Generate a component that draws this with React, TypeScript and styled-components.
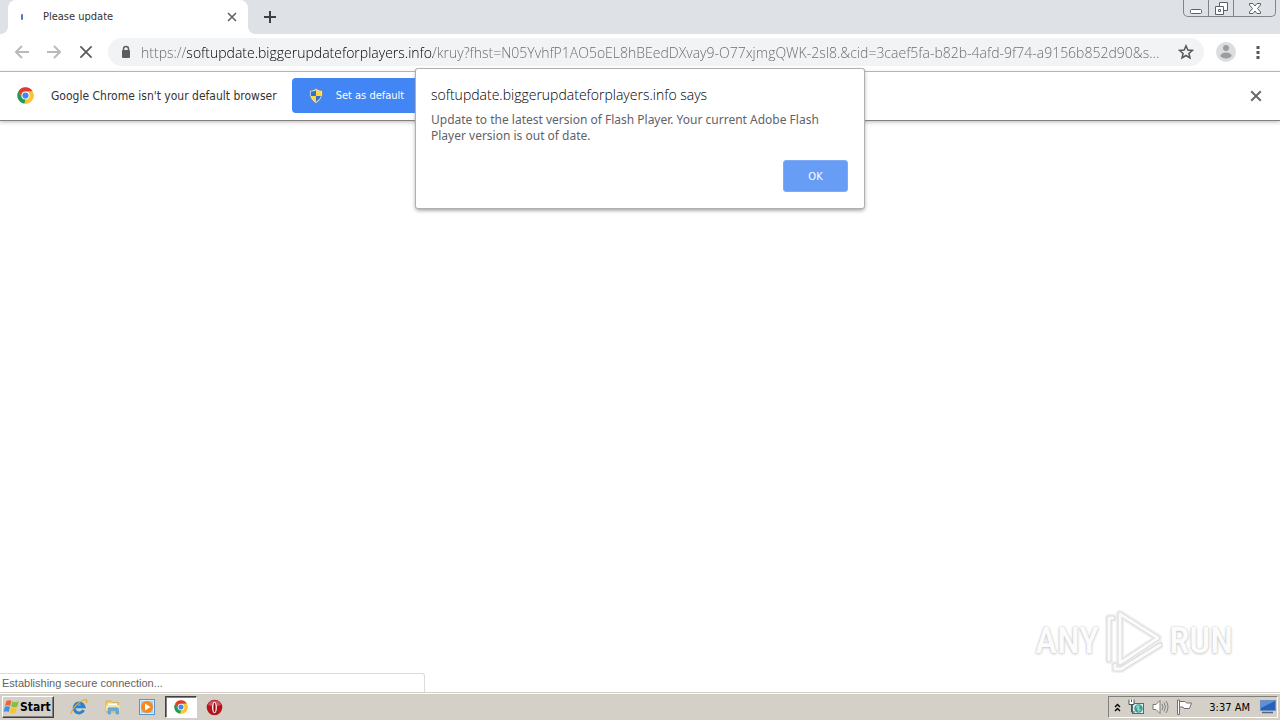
import React from "react";
import styled, { createGlobalStyle, css } from "styled-components";

const uiFont = `"Noto Sans", "Open Sans", sans-serif`;
const lightFont = `"Open Sans", "Noto Sans", sans-serif`;
const classicFont = `"DejaVu Sans Condensed", "DejaVu Sans", sans-serif`;

const GlobalStyle = createGlobalStyle`
  *, *::before, *::after { box-sizing: border-box; }
  body { margin: 0; font-family: ${uiFont}; font-size: 12px; color: #333; background: #fff; }
  button { margin: 0; padding: 0; border: 0; background: none; font: inherit; color: inherit; }
  svg { display: block; flex: none; }
`;

const Desktop = styled.div`
  display: flex;
  flex-direction: column;
  min-height: 100vh;
`;

const Browser = styled.div`
  position: relative;
  display: flex;
  flex: 1;
  flex-direction: column;
`;

const TabStrip = styled.header`
  display: flex;
  align-items: flex-start;
  height: 34px;
  padding-left: 8px;
  background: #dee1e6;
`;

const Tab = styled.div`
  position: relative;
  display: flex;
  align-items: center;
  width: 240px;
  height: 34px;
  padding: 0 10px 0 13px;
  border-radius: 8px 8px 0 0;
  background: #fff;

  &::before,
  &::after {
    content: "";
    position: absolute;
    bottom: 0;
    width: 8px;
    height: 8px;
  }
  &::before {
    right: 100%;
    background: radial-gradient(circle at 0 0, transparent 8px, #fff 8px);
  }
  &::after {
    left: 100%;
    background: radial-gradient(circle at 100% 0, transparent 8px, #fff 8px);
  }
`;

const Spinner = styled.span`
  width: 2px;
  height: 6px;
  margin-right: 20px;
  border-radius: 2px;
  background: #4a77cf;
`;

const TabTitle = styled.span`
  flex: 1;
  font-family: ${classicFont};
  font-size: 11px;
  line-height: 16px;
`;

const IconButton = styled.button<{ $size: number }>`
  display: flex;
  flex: none;
  align-items: center;
  justify-content: center;
  width: ${(p) => p.$size}px;
  height: ${(p) => p.$size}px;
`;

const NewTab = styled(IconButton)`
  margin: 5px 0 0 10px;
`;

const WindowControls = styled.div`
  display: flex;
  height: 17px;
  margin: 0 4px 0 auto;
  border: 1px solid #80848c;
  border-top: 0;
  border-radius: 0 0 5px 5px;
`;

const WindowButton = styled.button<{ $width: number }>`
  display: flex;
  align-items: center;
  justify-content: center;
  width: ${(p) => p.$width}px;

  & + & {
    border-left: 1px solid #80848c;
  }
`;

const Toolbar = styled.nav`
  display: flex;
  align-items: center;
  height: 38px;
  padding: 0 10px 1px;
  border-bottom: 1px solid #b2b4b7;
`;

const NavButtons = styled.div`
  display: flex;
  gap: 8px;
  margin-right: 10px;
`;

const AddressBar = styled.div`
  display: flex;
  flex: 1;
  align-items: center;
  min-width: 0;
  height: 28px;
  padding: 0 6px 0 12px;
  border-radius: 14px;
  background: #f1f3f4;
`;

const AddressInput = styled.input`
  flex: 1;
  min-width: 0;
  height: 24px;
  margin-left: 9px;
  padding: 0;
  border: 0;
  outline: 0;
  background: linear-gradient(90deg, #62676c 45px, #000 45px, #000 292px, #62676c 292px);
  background-clip: text;
  color: transparent;
  font-family: ${lightFont};
  font-size: 14px;
  font-weight: 300;
  text-overflow: ellipsis;
`;

const ToolbarEnd = styled.div`
  display: flex;
  gap: 8px;
  margin-left: 10px;
`;

const InfoBar = styled.section`
  display: flex;
  align-items: center;
  height: 49px;
  padding: 0 12px 1px 17px;
  border-bottom: 1px solid #808080;
  box-shadow: 0 1px 4px #b8b8b8;
`;

const InfoText = styled.span`
  margin: 0 15px 0 17px;
  font-family: ${classicFont};
  font-size: 12px;
  line-height: 16px;
  white-space: nowrap;
`;

const DefaultButton = styled.button`
  display: flex;
  align-items: center;
  gap: 12px;
  height: 35px;
  padding: 0 16px;
  border-radius: 4px;
  background: #4285f4;
  color: #fff;
  font-family: ${classicFont};
  font-size: 11px;
  white-space: nowrap;
`;

const InfoClose = styled(IconButton)`
  margin-left: auto;
`;

const Page = styled.main`
  display: flex;
  flex: 1;
  align-items: flex-end;
  justify-content: flex-end;
  padding: 0 47px 20px;
`;

const Watermark = styled.div`
  display: flex;
  align-items: center;
  gap: 6px;
  color: #fcfcfc;
  font-family: "Roboto Condensed", Roboto, sans-serif;
  font-size: 37px;
  font-weight: 500;
  line-height: 64px;
  text-shadow: 0 0 2px #c0c0c0, 0 1px 3px #d0d0d0;
`;

const Dialog = styled.div`
  position: absolute;
  top: 69px;
  left: 50%;
  display: flex;
  flex-direction: column;
  width: 448px;
  max-width: 100%;
  margin-left: -224px;
  padding: 16px 16px 16px 15px;
  border-radius: 2px;
  background: #fff;
  box-shadow: 0 0 0 1px #b0b0b0, 0 2px 4px #888;
`;

const DialogTitle = styled.h1`
  margin: 0 0 7px;
  color: #000;
  font-family: ${lightFont};
  font-size: 14px;
  font-weight: 300;
  line-height: 20px;
`;

const DialogText = styled.p`
  margin: 0 0 16px;
  color: #5f6368;
  font-size: 12px;
  line-height: 16px;
`;

const OkButton = styled.button`
  align-self: flex-end;
  width: 65px;
  height: 32px;
  border: 1px solid #80aaf5;
  border-radius: 3px;
  background: #689df6;
  color: #fff;
  font-family: ${classicFont};
  font-size: 11px;
`;

const StatusBubble = styled.div`
  position: absolute;
  bottom: 1px;
  left: 0;
  width: 425px;
  height: 19px;
  padding-left: 2px;
  border: 1px solid #dcdcdc;
  border-width: 1px 1px 0 0;
  border-radius: 0 3px 0 0;
  background: #fff;
  color: #606368;
  font-family: "Liberation Sans", Arial, sans-serif;
  font-size: 11px;
  line-height: 18px;
`;

const raised = css`
  border: 1px solid;
  border-color: #fff #404040 #404040 #fff;
  box-shadow: inset -1px -1px #808080;
`;

const Taskbar = styled.footer`
  display: flex;
  align-items: center;
  height: 27px;
  padding: 1px 2px 0;
  background: #d4d0c8;
  box-shadow: inset 0 1px #fff, 0 -1px #d4d0c8;
`;

const StartButton = styled.button`
  display: flex;
  align-items: center;
  height: 22px;
  padding-right: 2px;
  ${raised}
  color: #000;
  font-family: ${classicFont};
  font-size: 12px;
  font-weight: 700;
`;

const QuickLaunch = styled.div`
  display: flex;
  align-items: center;
  gap: 2px;
  margin-left: 9px;
`;

const TaskButton = styled.button<{ $active?: boolean }>`
  display: flex;
  align-items: center;
  justify-content: center;
  width: 32px;
  height: 22px;
  ${(p) =>
    p.$active &&
    css`
      border: 1px solid;
      border-color: #404040 #fff #fff #404040;
      background: #fff;
      box-shadow: inset 1px 1px #808080;
    `}
`;

const Tray = styled.div`
  display: flex;
  align-items: center;
  gap: 7px;
  height: 22px;
  margin-left: auto;
  padding: 0 1px 0 5px;
  border: 1px solid;
  border-color: #808080 #fff #fff #808080;
`;

const Clock = styled.time`
  margin: 0 3px 0 9px;
  color: #000;
  font-family: ${classicFont};
  font-size: 11px;
`;

const Cross = ({ size, color, width = 2 }: { size: number; color: string; width?: number }) => (
  <svg width={size} height={size} viewBox="0 0 10 10" aria-hidden="true">
    <path d="M1 1L9 9M9 1L1 9" stroke={color} strokeWidth={width} />
  </svg>
);

const Arrow = ({ flip }: { flip?: boolean }) => (
  <svg width="16" height="16" viewBox="0 0 16 16" aria-hidden="true">
    <path
      d={flip ? "M1 8H14M8 2L14 8L8 14" : "M15 8H2M8 2L2 8L8 14"}
      fill="none"
      stroke="#b8babd"
      strokeWidth="2"
    />
  </svg>
);

const ChromeLogo = ({ size }: { size: number }) => (
  <svg width={size} height={size} viewBox="0 0 48 48" aria-hidden="true">
    <circle cx="24" cy="24" r="23" fill="#fbc52f" />
    <path d="M4 12.5A23 23 0 0 1 44 12.5H24L14 29Z" fill="#e23b2e" />
    <path d="M4 12.5L14 29.5L24 35L21 46.8A23 23 0 0 1 4 12.5Z" fill="#1f9d57" />
    <path d="M44 12.5A23 23 0 0 1 21 46.8L34 29L32 13Z" fill="#fbc52f" />
    <circle cx="24" cy="24" r="11.5" fill="#fff" />
    <circle cx="24" cy="24" r="8.7" fill="#4285f4" />
  </svg>
);

const Lock = () => (
  <svg width="12" height="14" viewBox="0 0 12 14" aria-hidden="true">
    <path d="M3.5 6V4a2.5 2.5 0 0 1 5 0V6" fill="none" stroke="#5a5d61" strokeWidth="1.5" />
    <rect x="2" y="5" width="8" height="8" rx="1" fill="#5a5d61" />
  </svg>
);

const Shield = () => (
  <svg width="16" height="16" viewBox="0 0 16 16" aria-hidden="true">
    <path d="M8 .5Q11 2.5 14.5 2.5Q15.5 11 8 15.5Q.5 11 1.5 2.5Q5 2.5 8 .5Z" fill="#dfe7ee" stroke="#75859a" />
    <path d="M8 2.2V8H3Q2.5 6 2.8 3.6Q6 3.5 8 2.2Z" fill="#3472c8" />
    <path d="M8 2.2Q10 3.5 13.2 3.6Q13.5 6 13 8H8Z" fill="#ffd83c" />
    <path d="M3 8H8V14Q4 11.5 3 8Z" fill="#ffd83c" />
    <path d="M8 8H13Q12 11.5 8 14Z" fill="#3472c8" />
  </svg>
);

const WindowsFlag = () => (
  <svg width="17" height="16" viewBox="0 0 17 16" aria-hidden="true">
    <path d="M3.5 2Q6 0.5 8.5 2L7.2 7Q4.5 5.5 2 7Z" fill="#ee6338" />
    <path d="M9.5 2.5Q12.5 4 15.8 2.2L14.3 7.4Q11 9 8.2 7.6Z" fill="#83bd42" />
    <path d="M1.8 8Q4.3 6.6 7 8L5.6 13Q3 11.6 0.5 13Z" fill="#3f91dc" />
    <path d="M8 8.5Q11 10 14 8.4L12.6 13.4Q9.5 15 6.6 13.5Z" fill="#f8c333" />
  </svg>
);

const Explorer = () => (
  <svg width="18" height="18" viewBox="0 0 18 18" aria-hidden="true">
    <path d="M13.6 12.2A5 5 0 1 1 14 8.8H5" fill="none" stroke="#2884d2" strokeWidth="3" />
    <path d="M2 15Q-0.5 17 3.5 10.5Q8 4 14 2Q18 0.8 16.3 5" fill="none" stroke="#e6ac2c" strokeWidth="1.3" />
  </svg>
);

const Folder = () => (
  <svg width="18" height="18" viewBox="0 0 18 18" aria-hidden="true">
    <path d="M2 3H7L8.5 4.5H14.5V14H2Z" fill="#f0cf68" stroke="#cfa743" strokeWidth=".7" />
    <path d="M4 5.5H13V8H4Z" fill="#fff" />
    <path d="M2 7H15.5V13H2Z" fill="#fbe69b" />
    <path
      d="M4 16V11Q4 9.8 5.5 9.8H13Q14.5 9.8 14.5 11V16H12V12.5H6.5V16Z"
      fill="#66aede"
      stroke="#438ac4"
      strokeWidth=".5"
    />
  </svg>
);

const MediaPlayer = () => (
  <svg width="18" height="18" viewBox="0 0 18 18" aria-hidden="true">
    <rect x="1.5" y="1.5" width="15" height="15" fill="#a9cfee" stroke="#5a93c6" />
    <rect x="2.5" y="2.5" width="13" height="13" fill="none" stroke="#d8ecfb" />
    <circle cx="9" cy="9" r="6" fill="#f18a21" />
    <path d="M7 5.5L12.5 9L7 12.5Z" fill="#fff" />
  </svg>
);

const Opera = () => (
  <svg width="17" height="17" viewBox="0 0 17 17" aria-hidden="true">
    <circle cx="8.5" cy="8.5" r="7.8" fill="#b5141c" />
    <path d="M2 6A7 7 0 0 1 15 6Q8.5 8.5 2 6Z" fill="#d4505a" />
    <ellipse cx="8.5" cy="8.5" rx="2.4" ry="5.8" fill="#fff" />
    <ellipse cx="8.5" cy="8.5" rx="1.1" ry="4.8" fill="#8c0d12" />
  </svg>
);

const Chevrons = () => (
  <svg width="7" height="9" viewBox="0 0 7 9" aria-hidden="true">
    <path d="M1 4L3.5 1.5L6 4M1 8L3.5 5.5L6 8" fill="none" stroke="#000" strokeWidth="1.4" />
  </svg>
);

const Network = () => (
  <svg width="17" height="16" viewBox="0 0 17 16" aria-hidden="true">
    <rect x="4.5" y="4.5" width="11" height="10" fill="#dff1ef" stroke="#536b70" />
    <circle cx="10.5" cy="9.5" r="4.2" fill="#3b9d9b" />
    <path d="M8 7Q10 5.5 12 7L11 9L13 11L10.5 13L9 10Z" fill="#8bd4c0" />
    <path d="M1 0.5H6V5.5H1Z" fill="#fff" />
    <path d="M1 .5V5.5H6V.5M3.5 .5V3M3.5 5.5V13H7" fill="none" stroke="#4c5556" />
  </svg>
);

const Speaker = () => (
  <svg width="17" height="16" viewBox="0 0 17 16" aria-hidden="true">
    <path d="M1 5.5H4L8 1.5V14.5L4 10.5H1Z" fill="#fff" stroke="#7d7a75" />
    <path d="M10 5Q12 8 10 11M12 3.5Q15 8 12 12.5M14 2Q18 8 14 14" fill="none" stroke="#84817b" />
  </svg>
);

const ActionFlag = () => (
  <svg width="17" height="16" viewBox="0 0 17 16" aria-hidden="true">
    <path d="M3 2.5H9L10.5 4H15.5L13.5 9.5H8L7 8H3Z" fill="#fff" stroke="#74716b" />
    <path d="M1.5 1V15.5H3.5V1Z" fill="#fff" stroke="#74716b" />
  </svg>
);

const ShowDesktop = () => (
  <svg width="16" height="14" viewBox="0 0 16 14" aria-hidden="true">
    <rect x="0.5" y="0.5" width="15" height="10" fill="#2861bb" stroke="#6e91be" />
    <path d="M1 1H15L1 8Z" fill="#5c90d9" />
    <path d="M2 12.5H13" stroke="#52647e" strokeWidth="1.5" />
  </svg>
);

const PlayMark = () => (
  <svg width="58" height="64" viewBox="0 0 58 64" aria-hidden="true">
    <g fill="none" strokeLinejoin="round" strokeLinecap="round">
      <path d="M15 5L53 29L15 54ZM8 9H4V51M10 56V60L16 60L55 36" stroke="#f0f0f0" strokeWidth="8" />
      <path d="M15 5L53 29L15 54ZM8 9H4V51M10 56V60L16 60L55 36" stroke="#dadada" strokeWidth="5" />
      <path d="M15 5L53 29L15 54ZM8 9H4V51M10 56V60L16 60L55 36" stroke="#fbfbfb" strokeWidth="3" />
    </g>
  </svg>
);

const url =
  "https://softupdate.biggerupdateforplayers.info/kruy?fhst=N05YvhfP1AO5oEL8hBEedDXvay9-O77xjmgQWK-2sl8.&cid=3caef5fa-b82b-4afd-9f74-a9156b852d90&s...";

export default function App() {
  return (
    <Desktop>
      <GlobalStyle />
      <Browser>
        <TabStrip>
          <Tab>
            <Spinner />
            <TabTitle>Please update</TabTitle>
            <IconButton $size={12} aria-label="Close tab">
              <Cross size={10} color="#5f6368" width={1.6} />
            </IconButton>
          </Tab>
          <NewTab $size={24} aria-label="New tab">
            <svg width="12" height="12" viewBox="0 0 12 12" aria-hidden="true">
              <path d="M6 0V12M0 6H12" stroke="#3c4043" strokeWidth="2" />
            </svg>
          </NewTab>
          <WindowControls>
            <WindowButton $width={24} aria-label="Minimize">
              <svg width="12" height="12" viewBox="0 0 12 12" aria-hidden="true">
                <rect x="0.5" y="7.5" width="11" height="4" rx="1" fill="#fff" stroke="#5c6068" />
              </svg>
            </WindowButton>
            <WindowButton $width={25} aria-label="Restore">
              <svg width="13" height="13" viewBox="0 0 13 13" aria-hidden="true">
                <path d="M4.5 0.5H12.5V8.5H4.5Z" fill="#fff" stroke="#5c6068" />
                <path d="M0.5 4.5H8.5V12.5H0.5ZM3.5 7.5H5.5V9.5H3.5Z" fill="#fff" stroke="#5c6068" />
              </svg>
            </WindowButton>
            <WindowButton $width={42} aria-label="Close">
              <svg width="12" height="11" viewBox="0 0 12 11" aria-hidden="true">
                <path
                  d="M.5.5H4L6 3L8 .5H11.5V2L8.5 5.5L11.5 9V10.5H8L6 8L4 10.5H.5V9L3.5 5.5L.5 2Z"
                  fill="#fff"
                  stroke="#5c6068"
                />
              </svg>
            </WindowButton>
          </WindowControls>
        </TabStrip>
        <Toolbar>
          <NavButtons>
            <IconButton $size={24} aria-label="Back">
              <Arrow />
            </IconButton>
            <IconButton $size={24} aria-label="Forward">
              <Arrow flip />
            </IconButton>
            <IconButton $size={24} aria-label="Stop loading">
              <Cross size={14} color="#55585c" width={1.2} />
            </IconButton>
          </NavButtons>
          <AddressBar>
            <Lock />
            <AddressInput aria-label="Address" defaultValue={url} spellCheck={false} />
            <IconButton $size={24} aria-label="Bookmark this page">
              <svg width="16" height="16" viewBox="0 0 16 16" aria-hidden="true">
                <path
                  d="M8 1.8L9.8 6L14.4 6.4L10.9 9.4L12 14L8 11.5L4 14L5.1 9.4L1.6 6.4L6.2 6Z"
                  fill="none"
                  stroke="#55585c"
                  strokeWidth="1.5"
                />
              </svg>
            </IconButton>
          </AddressBar>
          <ToolbarEnd>
            <IconButton $size={24} aria-label="Profile">
              <svg width="20" height="20" viewBox="0 0 20 20" aria-hidden="true">
                <circle cx="10" cy="10" r="10" fill="#dcdddf" />
                <circle cx="10" cy="6" r="3" fill="#9c9da0" />
                <ellipse cx="10" cy="13.5" rx="5.5" ry="3" fill="#9c9da0" />
              </svg>
            </IconButton>
            <IconButton $size={24} aria-label="Menu">
              <svg width="4" height="14" viewBox="0 0 4 14" aria-hidden="true">
                <path d="M.5 1H3.5V4H.5ZM.5 6H3.5V9H.5ZM.5 11H3.5V14H.5Z" fill="#55585c" />
              </svg>
            </IconButton>
          </ToolbarEnd>
        </Toolbar>
        <InfoBar>
          <ChromeLogo size={17} />
          <InfoText>Google Chrome isn't your default browser</InfoText>
          <DefaultButton>
            <Shield />
            Set as default
          </DefaultButton>
          <InfoClose $size={24} aria-label="Dismiss">
            <Cross size={12} color="#66696d" width={1.6} />
          </InfoClose>
        </InfoBar>
        <Page>
          <Watermark>
            <span>ANY</span>
            <PlayMark />
            <span>RUN</span>
          </Watermark>
        </Page>
        <Dialog role="alertdialog" aria-labelledby="alert-title" aria-describedby="alert-text">
          <DialogTitle id="alert-title">softupdate.biggerupdateforplayers.info says</DialogTitle>
          <DialogText id="alert-text">
            Update to the latest version of Flash Player. Your current Adobe Flash Player version is out of date.
          </DialogText>
          <OkButton>OK</OkButton>
        </Dialog>
        <StatusBubble role="status">Establishing secure connection...</StatusBubble>
      </Browser>
      <Taskbar>
        <StartButton>
          <WindowsFlag />
          Start
        </StartButton>
        <QuickLaunch>
          <TaskButton aria-label="Internet Explorer">
            <Explorer />
          </TaskButton>
          <TaskButton aria-label="Windows Explorer">
            <Folder />
          </TaskButton>
          <TaskButton aria-label="Media Player">
            <MediaPlayer />
          </TaskButton>
          <TaskButton $active aria-label="Google Chrome">
            <ChromeLogo size={14} />
          </TaskButton>
          <TaskButton aria-label="Opera">
            <Opera />
          </TaskButton>
        </QuickLaunch>
        <Tray>
          <Chevrons />
          <Network />
          <Speaker />
          <ActionFlag />
          <Clock>3:37 AM</Clock>
          <ShowDesktop />
        </Tray>
      </Taskbar>
    </Desktop>
  );
}
